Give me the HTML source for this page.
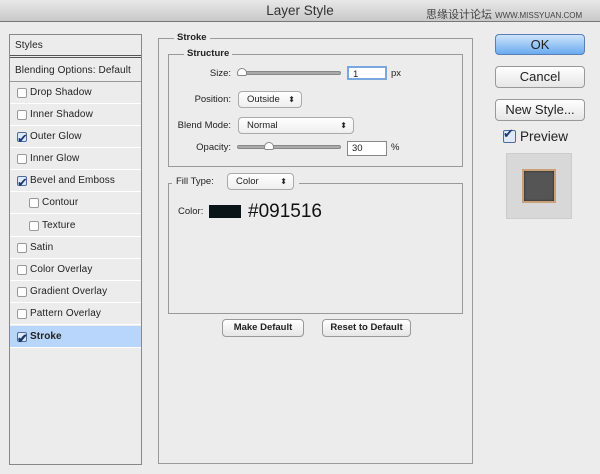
<!DOCTYPE html><html><head><meta charset="utf-8"><style>
*{margin:0;padding:0;box-sizing:border-box}
body{width:600px;height:474px;background:#ececec;font-family:"Liberation Sans",sans-serif;font-size:10px;color:#222;position:relative;overflow:hidden}
.a{position:absolute}
.tb{left:0;top:0;width:600px;height:22px;background:linear-gradient(#e8e8e8,#c9c9c9);border-bottom:1px solid #777}
.row{position:absolute;left:10px;width:131px;height:22px;border-bottom:1px solid #fff;line-height:22px;font-size:10px;letter-spacing:0.1px}
.cb{position:absolute;top:6px;width:10px;height:10px;border:1px solid #999;border-radius:2px;background:#fff}
.ck{border-color:#4a6d9e;background:#dfe9f7}
.ck:after{content:"✔";position:absolute;left:-1px;top:-5px;font-size:13px;color:#1b3a6b}
.box{position:absolute;border:1px solid #9a9a9a}
.lg{position:absolute;background:#ececec;padding:0 3px;font-weight:bold;font-size:9.5px}
.sel{position:absolute;border:1px solid #aaa;border-radius:4px;background:linear-gradient(#fff,#eee);font-size:9.5px;line-height:15px;padding-left:8px}
.sel:after{content:"⬍";position:absolute;right:6px;top:0;font-size:8px}
.lbl{position:absolute;text-align:right;width:80px;font-size:9.5px}
.sl{position:absolute;height:4px;border-radius:2px;background:#aaa;border:1px solid #888}
.th{position:absolute;width:10px;height:8px;background:#fff;border:1px solid #888;border-radius:5px 5px 2px 2px}
.in{position:absolute;border:1px solid #888;background:#fff;font-size:9.5px;padding-left:4px;line-height:13px}
.btn{position:absolute;border:1px solid #999;border-radius:4px;background:linear-gradient(#fff,#e6e6e6);text-align:center;font-size:13px}
</style></head><body>
<div class="a tb"></div>
<div class="a" style="left:0;width:600px;top:3px;text-align:center;font-size:13.5px;color:#333">Layer Style</div>
<div class="a" style="left:426px;top:6px;font-size:11px;color:#444;font-family:'Liberation Sans','Noto Sans CJK SC',sans-serif">思缘设计论坛 <span style="font-size:8px">WWW.MISSYUAN.COM</span></div>

<div class="box" style="left:9px;top:34px;width:133px;height:431px;border-color:#888"></div>
<div class="row" style="top:35px;height:23px;border-bottom:3px double #555;line-height:22px;padding-left:5px">Styles</div>
<div class="row" style="top:60px;line-height:22px;padding-left:5px;border-bottom:1px solid #999">Blending Options: Default</div>
<div class="row" style="top:82px"><span class="cb" style="left:7px"></span><span style="padding-left:20px">Drop Shadow</span></div>
<div class="row" style="top:104px"><span class="cb" style="left:7px"></span><span style="padding-left:20px">Inner Shadow</span></div>
<div class="row" style="top:126px"><span class="cb ck" style="left:7px"></span><span style="padding-left:20px">Outer Glow</span></div>
<div class="row" style="top:148px"><span class="cb" style="left:7px"></span><span style="padding-left:20px">Inner Glow</span></div>
<div class="row" style="top:170px"><span class="cb ck" style="left:7px"></span><span style="padding-left:20px">Bevel and Emboss</span></div>
<div class="row" style="top:192px"><span class="cb" style="left:19px"></span><span style="padding-left:32px">Contour</span></div>
<div class="row" style="top:215px"><span class="cb" style="left:19px"></span><span style="padding-left:32px">Texture</span></div>
<div class="row" style="top:237px"><span class="cb" style="left:7px"></span><span style="padding-left:20px">Satin</span></div>
<div class="row" style="top:259px"><span class="cb" style="left:7px"></span><span style="padding-left:20px">Color Overlay</span></div>
<div class="row" style="top:281px"><span class="cb" style="left:7px"></span><span style="padding-left:20px">Gradient Overlay</span></div>
<div class="row" style="top:303px"><span class="cb" style="left:7px"></span><span style="padding-left:20px">Pattern Overlay</span></div>
<div class="row" style="top:326px;background:#b8d6fb;font-weight:bold"><span class="cb ck" style="left:7px"></span><span style="padding-left:20px">Stroke</span></div>

<div class="box" style="left:158px;top:38px;width:315px;height:426px"></div>
<div class="lg" style="left:174px;top:32px">Stroke</div>
<div class="box" style="left:168px;top:54px;width:295px;height:113px"></div>
<div class="lg" style="left:184px;top:48px">Structure</div>
<div class="lbl" style="left:151px;top:68px">Size:</div>
<div class="sl" style="left:237px;top:71px;width:104px"></div><div class="th" style="left:237px;top:68px"></div>
<div class="in" style="left:347px;top:66px;width:40px;height:14px;border:2px solid #7aa7e0">1</div>
<div class="a" style="left:391px;top:68px;font-size:9.5px">px</div>
<div class="lbl" style="left:151px;top:94px">Position:</div>
<div class="sel" style="left:238px;top:91px;width:64px;height:17px">Outside</div>
<div class="lbl" style="left:151px;top:120px">Blend Mode:</div>
<div class="sel" style="left:238px;top:117px;width:116px;height:17px">Normal</div>
<div class="lbl" style="left:151px;top:142px">Opacity:</div>
<div class="sl" style="left:237px;top:145px;width:104px"></div><div class="th" style="left:264px;top:142px"></div>
<div class="in" style="left:347px;top:141px;width:40px;height:15px">30</div>
<div class="a" style="left:391px;top:142px;font-size:9.5px">%</div>

<div class="box" style="left:168px;top:183px;width:295px;height:131px"></div>
<div class="a" style="left:172px;top:176px;background:#ececec;padding:0 4px;width:127px;height:14px;font-size:9.5px">Fill Type:</div>
<div class="sel" style="left:227px;top:173px;width:67px;height:17px">Color</div>
<div class="a" style="left:178px;top:206px;font-size:9.5px">Color:</div>
<div class="a" style="left:209px;top:205px;width:32px;height:13px;background:#091516"></div>
<div class="a" style="left:248px;top:201px;font-size:19px;color:#111">#091516</div>
<div class="btn" style="left:222px;top:319px;width:82px;height:18px;font-size:9.5px;line-height:16px;font-weight:bold">Make Default</div>
<div class="btn" style="left:322px;top:319px;width:89px;height:18px;font-size:9.5px;line-height:16px;font-weight:bold">Reset to Default</div>

<div class="btn" style="left:495px;top:34px;width:90px;height:21px;line-height:19px;background:linear-gradient(#cfe3fb,#6aaaf0);border-color:#5a7fb5">OK</div>
<div class="btn" style="left:495px;top:66px;width:90px;height:22px;line-height:20px">Cancel</div>
<div class="btn" style="left:495px;top:99px;width:90px;height:22px;line-height:20px">New Style...</div>
<span class="cb ck a" style="left:503px;top:130px;width:13px;height:13px"></span>
<div class="a" style="left:520px;top:129px;font-size:13.5px">Preview</div>
<div class="a" style="left:506px;top:153px;width:66px;height:66px;background:#d8d8d8;border:1px solid #ccc"></div>
<div class="a" style="left:522px;top:169px;width:34px;height:34px;background:#555;border:2px solid #c9a07a;box-shadow:inset 0 0 2px #222"></div>
</body></html>
